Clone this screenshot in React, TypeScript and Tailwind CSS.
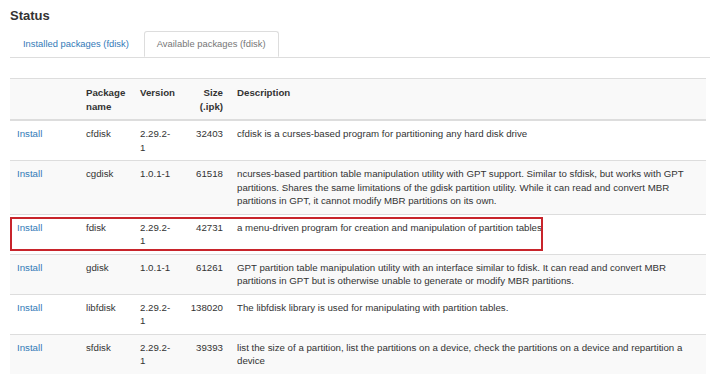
import React from "react";

type Pkg = {
  name: string;
  version: string;
  size: string;
  description: string;
};

const packages: Pkg[] = [
  {
    name: "cfdisk",
    version: "2.29.2-1",
    size: "32403",
    description: "cfdisk is a curses-based program for partitioning any hard disk drive",
  },
  {
    name: "cgdisk",
    version: "1.0.1-1",
    size: "61518",
    description:
      "ncurses-based partition table manipulation utility with GPT support. Similar to sfdisk, but works with GPT partitions. Shares the same limitations of the gdisk partition utility. While it can read and convert MBR partitions in GPT, it cannot modify MBR partitions on its own.",
  },
  {
    name: "fdisk",
    version: "2.29.2-1",
    size: "42731",
    description: "a menu-driven program for creation and manipulation of partition tables",
  },
  {
    name: "gdisk",
    version: "1.0.1-1",
    size: "61261",
    description:
      "GPT partition table manipulation utility with an interface similar to fdisk. It can read and convert MBR partitions in GPT but is otherwise unable to generate or modify MBR partitions.",
  },
  {
    name: "libfdisk",
    version: "2.29.2-1",
    size: "138020",
    description: "The libfdisk library is used for manipulating with partition tables.",
  },
  {
    name: "sfdisk",
    version: "2.29.2-1",
    size: "39393",
    description:
      "list the size of a partition, list the partitions on a device, check the partitions on a device and repartition a device",
  },
];

export default function App() {
  return (
    <div
      className="w-[720px] h-[376px] overflow-hidden bg-white px-[10px] pt-[7px] text-[#333] text-[9.7px] leading-[13.5px]"
      style={{ fontFamily: '"Liberation Sans", Arial, sans-serif' }}
    >
      <h2 className="text-[13px] font-bold leading-[18px] text-[#333]">Status</h2>

      {/* Tabs */}
      <ul className="mt-[6px] flex border-b border-[#ddd] text-[9.4px] leading-[14px]">
        <li className="mr-[2px]">
          <a href="#" className="block px-[12px] py-[5px] border border-transparent text-[#337ab7]">
            Installed packages (fdisk)
          </a>
        </li>
        <li className="-mb-px">
          <a
            href="#"
            className="block px-[12px] py-[5px] border border-[#ddd] border-b-white bg-white rounded-t-[3px] text-[#777]"
          >
            Available packages (fdisk)
          </a>
        </li>
      </ul>

      {/* Packages table */}
      <div className="relative mt-[20px]">
        <table className="w-[696px] table-fixed border-collapse">
          <colgroup>
            <col className="w-[69px]" />
            <col className="w-[54px]" />
            <col className="w-[48px]" />
            <col className="w-[49px]" />
            <col />
          </colgroup>
          <thead>
            <tr className="bg-[#f9f9f9] border-t border-[#ddd] border-b-2">
              <th className="px-[7px] pt-[7px] pb-[6px]"></th>
              <th className="px-[7px] pt-[7px] pb-[6px] text-left align-top font-bold">Package name</th>
              <th className="px-[7px] pt-[7px] pb-[6px] text-left align-top font-bold">Version</th>
              <th className="px-[7px] pt-[7px] pb-[6px] text-right align-top font-bold">Size (.ipk)</th>
              <th className="px-[7px] pt-[7px] pb-[6px] text-left align-top font-bold">Description</th>
            </tr>
          </thead>
          <tbody>
            {packages.map((p, i) => (
              <tr key={p.name} className={`border-t border-[#ddd] ${i % 2 === 1 ? "bg-[#f9f9f9]" : "bg-white"}`}>
                <td className="px-[7px] py-[6px] align-top">
                  <a href="#" className="text-[#337ab7]">
                    Install
                  </a>
                </td>
                <td className="px-[7px] py-[6px] align-top">{p.name}</td>
                <td className="px-[7px] py-[6px] align-top">{p.version}</td>
                <td className="px-[7px] py-[6px] align-top text-right">{p.size}</td>
                <td className="px-[7px] py-[6px] align-top">{p.description}</td>
              </tr>
            ))}
          </tbody>
        </table>

        {/* highlight annotation around the fdisk row */}
        <div className="pointer-events-none absolute left-0 top-[139px] w-[533px] h-[34px] border-2 border-[#c8242b]"></div>
      </div>
    </div>
  );
}
